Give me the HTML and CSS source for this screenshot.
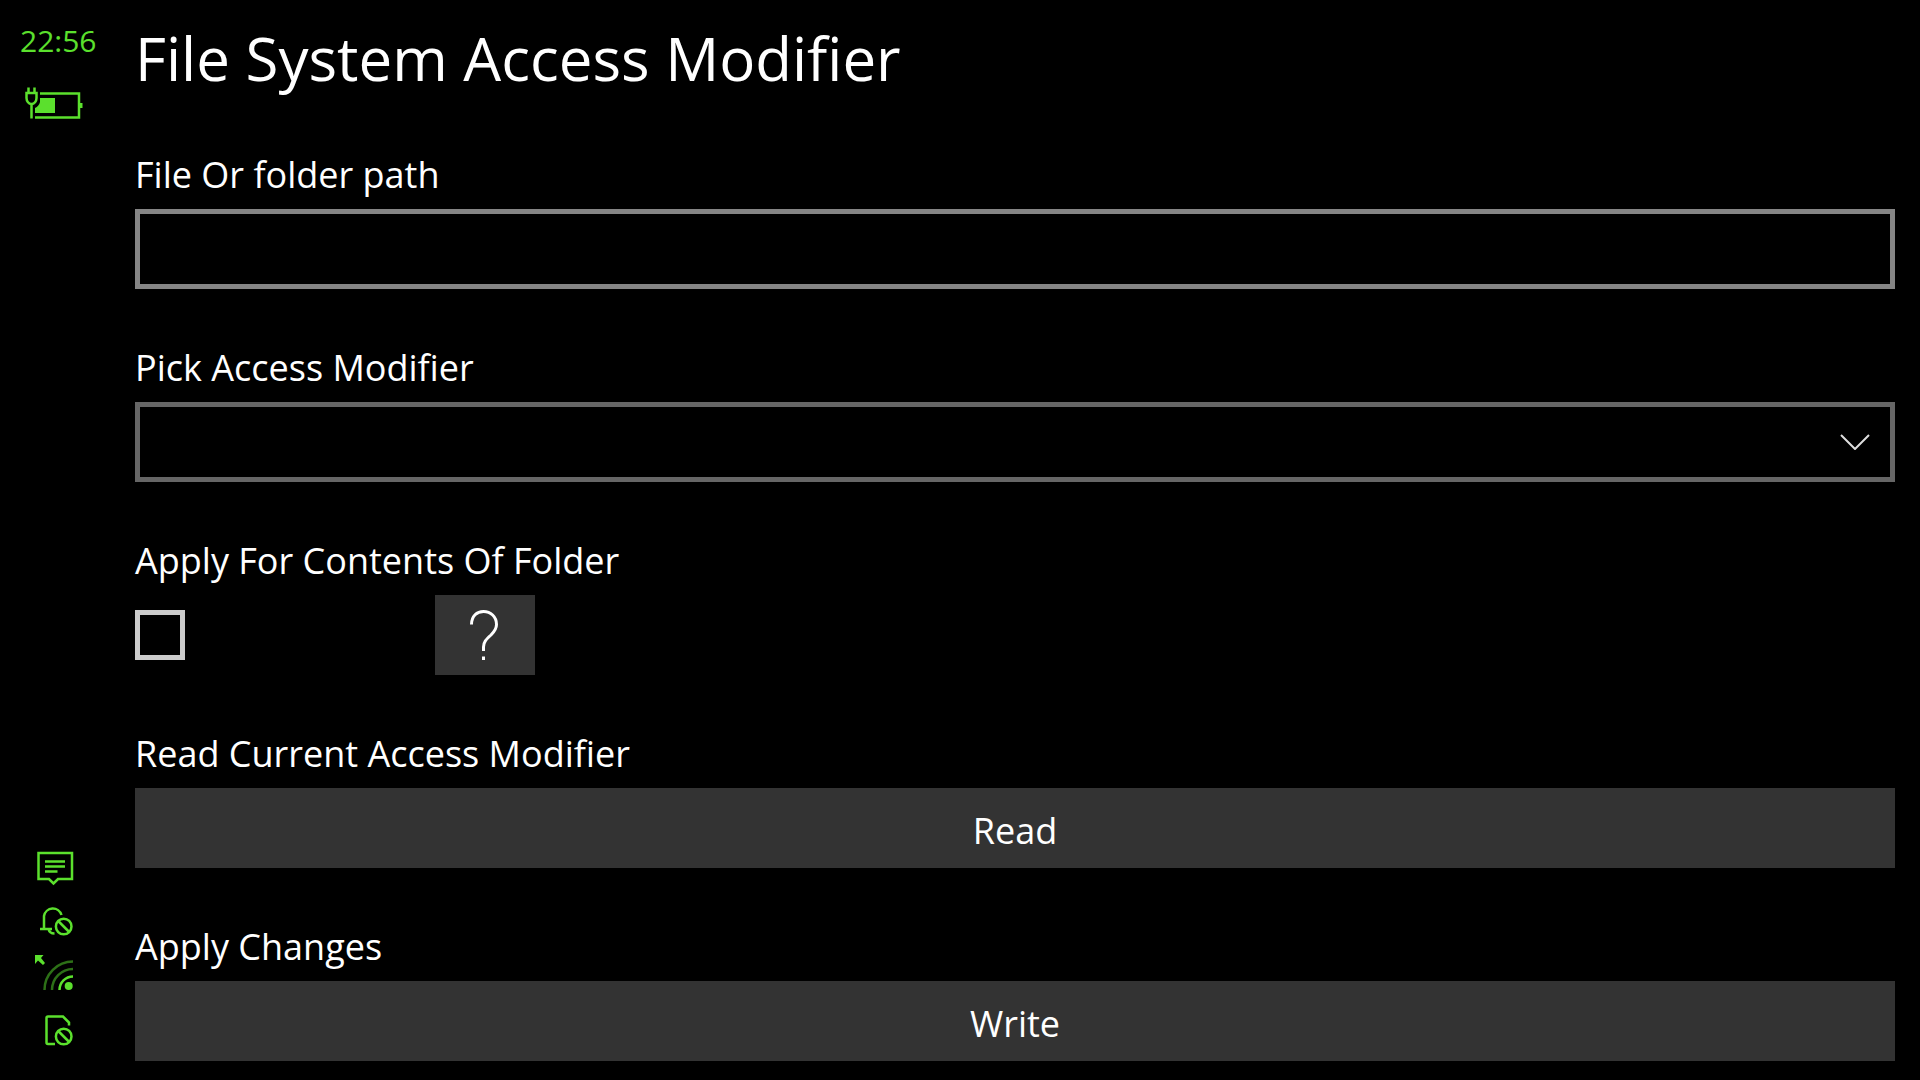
FILE: index.html
```html
<!DOCTYPE html>
<html lang="en">
<head>
<meta charset="utf-8">
<meta name="viewport" content="width=device-width, initial-scale=1">
<title>File System Access Modifier</title>
<link rel="stylesheet" href="styles.css">
</head>
<body>
<div class="screen">
  <aside class="rail" aria-label="Status">
    <div class="rail-group rail-top">
      <time class="clock">22:56</time>
      <svg class="battery" viewBox="0 0 60 34" aria-hidden="true">
        <path class="line" d="M16 7.500H55V31.500H11"/>
        <path class="solid" d="M56 17h2.500v5H56zM16 12H31v15H11V22Q15 20 16 16z"/>
        <path class="line" d="M4.500 1.500V7M10.500 1.500V7M2.500 7H12.500V12A5 6 0 0 1 2.500 12zM7.500 18V32.500"/>
      </svg>
    </div>
    <div class="rail-group rail-bottom">
      <svg class="status" viewBox="0 0 40 40" aria-hidden="true">
        <path class="line" d="M3.500 5H37V31H23L18.500 35.500L14 31H3.500zM10 13.500H30M10 18.500H30M10 23.500H22.500"/>
      </svg>
      <svg class="status" viewBox="0 0 40 40" aria-hidden="true">
        <path class="line" d="M5 27H17M9 27V14A9 9 0 0 1 26.500 13M13.500 27Q14.500 31.500 19.500 31.500"/>
        <circle class="line" cx="28.700" cy="24.500" r="7.800"/>
        <path class="line" d="M23.200 19L34.200 30"/>
      </svg>
      <svg class="status" viewBox="0 0 40 40" aria-hidden="true">
        <path class="solid" d="M0-1H8.500L6 2L10 7L8 9L3 4.500L0 8z"/>
        <path class="line dim" d="M9.500 34A28.500 28.500 0 0 1 38 5.500M17 34A21 21 0 0 1 38 13"/>
        <path class="line" d="M24.500 34A13.500 13.500 0 0 1 38 20.500"/>
        <circle class="solid" cx="33.700" cy="30" r="4"/>
      </svg>
      <svg class="status" viewBox="0 0 40 40" aria-hidden="true">
        <path class="line" d="M20 34H13Q11.500 34 11.500 32.500V8Q11.500 6.500 13 6.500H28L34 12.500V15.500"/>
        <circle class="line" cx="28.700" cy="26.500" r="7.800"/>
        <path class="line" d="M23.200 21L34.200 32"/>
      </svg>
    </div>
  </aside>

  <main class="content">
    <h1 class="title">File System Access Modifier</h1>
    <form class="form">
      <div class="field">
        <label class="label" for="path">File Or folder path</label>
        <input class="control textbox" id="path" type="text">
      </div>
      <div class="field">
        <label class="label" for="modifier">Pick Access Modifier</label>
        <div class="picker">
          <select class="control select" id="modifier"><option></option></select>
          <svg class="chevron" viewBox="0 0 30 16" aria-hidden="true"><path d="M1 1L15 15L29 1"/></svg>
        </div>
      </div>
      <div class="field">
        <label class="label" for="recursive">Apply For Contents Of Folder</label>
        <div class="check-row">
          <input class="check" id="recursive" type="checkbox">
          <button class="control help" type="button" aria-label="Help">
            <svg class="question" viewBox="0 0 28 50" aria-hidden="true">
              <path d="M1.500 14.500C1.500 6 7 1.500 13.500 1.500C20.500 1.500 26.500 6.500 26.500 14.500C26.500 19 24.500 21.500 21 25C16 29.500 13.500 32 13.500 37V41"/>
              <path d="M13.500 46.500V50"/>
            </svg>
          </button>
        </div>
      </div>
      <div class="field">
        <label class="label" for="read">Read Current Access Modifier</label>
        <button class="control button" id="read" type="button">Read</button>
      </div>
      <div class="field">
        <label class="label" for="write">Apply Changes</label>
        <button class="control button" id="write" type="button">Write</button>
      </div>
    </form>
  </main>
</div>
</body>
</html>
```
FILE: styles.css
```css
* {
  box-sizing: border-box;
}

body {
  margin: 0;
  background: #000;
  color: #fff;
  font-family: "Segoe UI", "Open Sans", "Noto Sans", sans-serif;
}

.screen {
  display: grid;
  grid-template-columns: 110px 1fr;
  min-height: 100vh;
}

/* Status rail */
.rail {
  display: flex;
  flex-direction: column;
  justify-content: space-between;
  padding: 21px 0 30px;
  color: #5be02d;
}

.rail-group {
  display: flex;
  flex-direction: column;
  align-items: flex-start;
}

.rail-top {
  gap: 25px;
  padding-left: 20px;
}

.rail-bottom {
  gap: 14px;
  padding-left: 35px;
}

.clock {
  font-size: 30px;
  line-height: 40px;
}

.battery {
  width: 60px;
  height: 34px;
  margin-left: 4px;
}

.status {
  width: 40px;
  height: 40px;
  overflow: visible;
}

.line {
  fill: none;
  stroke: currentColor;
  stroke-width: 2.5;
}

.solid {
  fill: currentColor;
}

.dim {
  stroke: #2d7017;
}

/* Page */
.content {
  padding: 13px 25px 19px;
}

.title {
  margin: 0 0 46px;
  font-size: 60px;
  font-weight: 400;
  line-height: 90px;
}

.form {
  display: flex;
  flex-direction: column;
  gap: 53px;
}

.field {
  display: flex;
  flex-direction: column;
  align-items: stretch;
  gap: 8px;
}

.label {
  align-self: flex-start;
  font-size: 36px;
  line-height: 52px;
}

.control {
  width: 100%;
  height: 80px;
  margin: 0;
  border: 0;
  border-radius: 0;
  background: #333;
  color: #fff;
  font-family: inherit;
  font-size: 36px;
}

.button {
  padding: 5px 0 0;
}

.textbox {
  padding: 0 20px;
  border: 5px solid #858585;
  background: #000;
}

.picker {
  display: grid;
  align-items: center;
}

.select,
.chevron {
  grid-area: 1 / 1;
}

.select {
  padding: 0 70px 0 20px;
  border: 5px solid #666;
  background: #000;
  appearance: none;
}

.chevron {
  justify-self: end;
  width: 30px;
  height: 16px;
  margin-right: 25px;
  pointer-events: none;
}

.chevron path {
  fill: none;
  stroke: #ddd;
  stroke-width: 2;
}

.check-row {
  display: grid;
  grid-template-columns: 300px 100px;
  align-items: center;
}

.check {
  width: 50px;
  height: 50px;
  margin: 0;
  border: 5px solid #ccc;
  background: #000;
  appearance: none;
}

.help {
  display: grid;
  place-items: center;
  padding: 0 2px 0 0;
}

.question {
  width: 28px;
  height: 50px;
}

.question path {
  fill: none;
  stroke: #fff;
  stroke-width: 3;
}
```
